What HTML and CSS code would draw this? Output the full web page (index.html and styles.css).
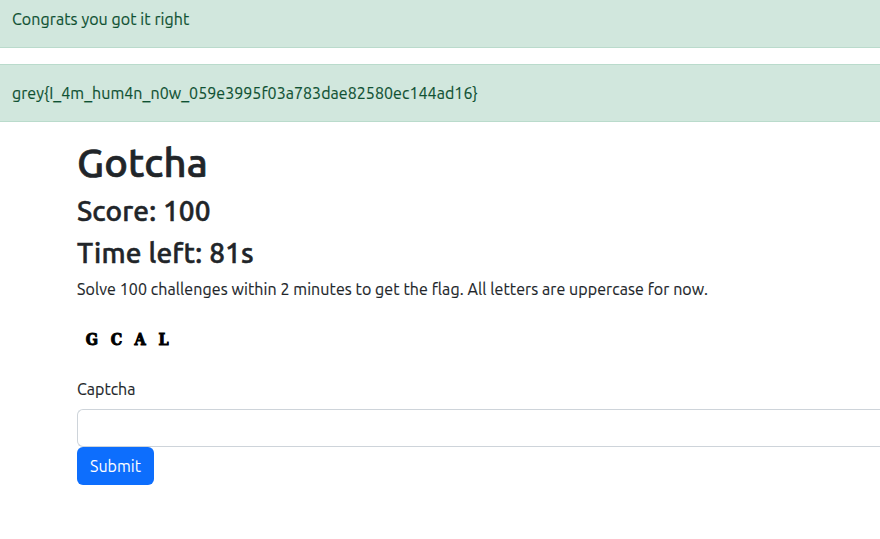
FILE: index.html
```html
<!DOCTYPE html>
<html lang="en">
<head>
<meta charset="utf-8">
<title>Gotcha</title>
<link rel="stylesheet" href="styles.css">
</head>
<body>
<div class="alert">Congrats you got it right</div>
<div class="alert flag">grey{I_4m_hum4n_n0w_059e3995f03a783dae82580ec144ad16}</div>
<main class="container">
<h1>Gotcha</h1>
<h3>Score: 100</h3>
<h3 class="time">Time left: 81s</h3>
<p>Solve 100 challenges within 2 minutes to get the flag. All letters are uppercase for now.</p>
<div class="captcha"><span>G</span><span>C</span><span>A</span><span>L</span></div>
<form>
<label for="captcha">Captcha</label>
<input id="captcha" type="text">
<button type="button">Submit</button>
</form>
</main>
</body>
</html>
```

FILE: styles.css
```css
* { box-sizing: border-box; }
body { margin: 0; height: 539px; overflow: hidden; background: #fff; color: #212529; font: 16px/24px Ubuntu, "Noto Sans", sans-serif; white-space: nowrap; }
.alert { height: 58px; margin-bottom: 16px; padding: 16px 12px; background: #d1e7dd; border: solid #badbcc; border-width: 1px 0; color: #0f5132; letter-spacing: 0.08px; -webkit-text-stroke: 0.15px; }
.flag { letter-spacing: 0.045px; }
.alert:first-child { height: 48px; padding-top: 7px; border-top: 0; }
.container { padding-left: 77px; }
h1, h3, p { margin: 0 0 8px; font-weight: 500; }
h1 { padding-top: 1px; font-size: 40px; line-height: 48px; height: 48px; letter-spacing: 0.15px; -webkit-text-stroke: 0.7px; }
h3 { font-size: 28px; line-height: 34px; letter-spacing: 0.15px; -webkit-text-stroke: 0.5px; }
.time { margin-bottom: 7px; letter-spacing: 0.19px; }
p { font-weight: 400; margin-bottom: 16px; letter-spacing: 0.081px; -webkit-text-stroke: 0.15px; }
.captcha { display: grid; grid-template-columns: 25px 24px 24px 23px; justify-items: center; height: 60px; margin-left: 2px; padding-top: 11px; color: #000; font: bold 16px/24px "DejaVu Serif", serif; -webkit-text-stroke: 1px; }
.captcha span { transform: scaleX(0.9); }
label { display: block; margin-bottom: 8px; -webkit-text-stroke: 0.15px; }
input { display: block; width: 100%; height: 38px; border: 1px solid #ced4da; border-right: 0; border-radius: 6px 0 0 6px; }
button { width: 77px; height: 38px; border: 0; border-radius: 6px; background: #0d6efd; color: #fff; font: inherit; }
```
